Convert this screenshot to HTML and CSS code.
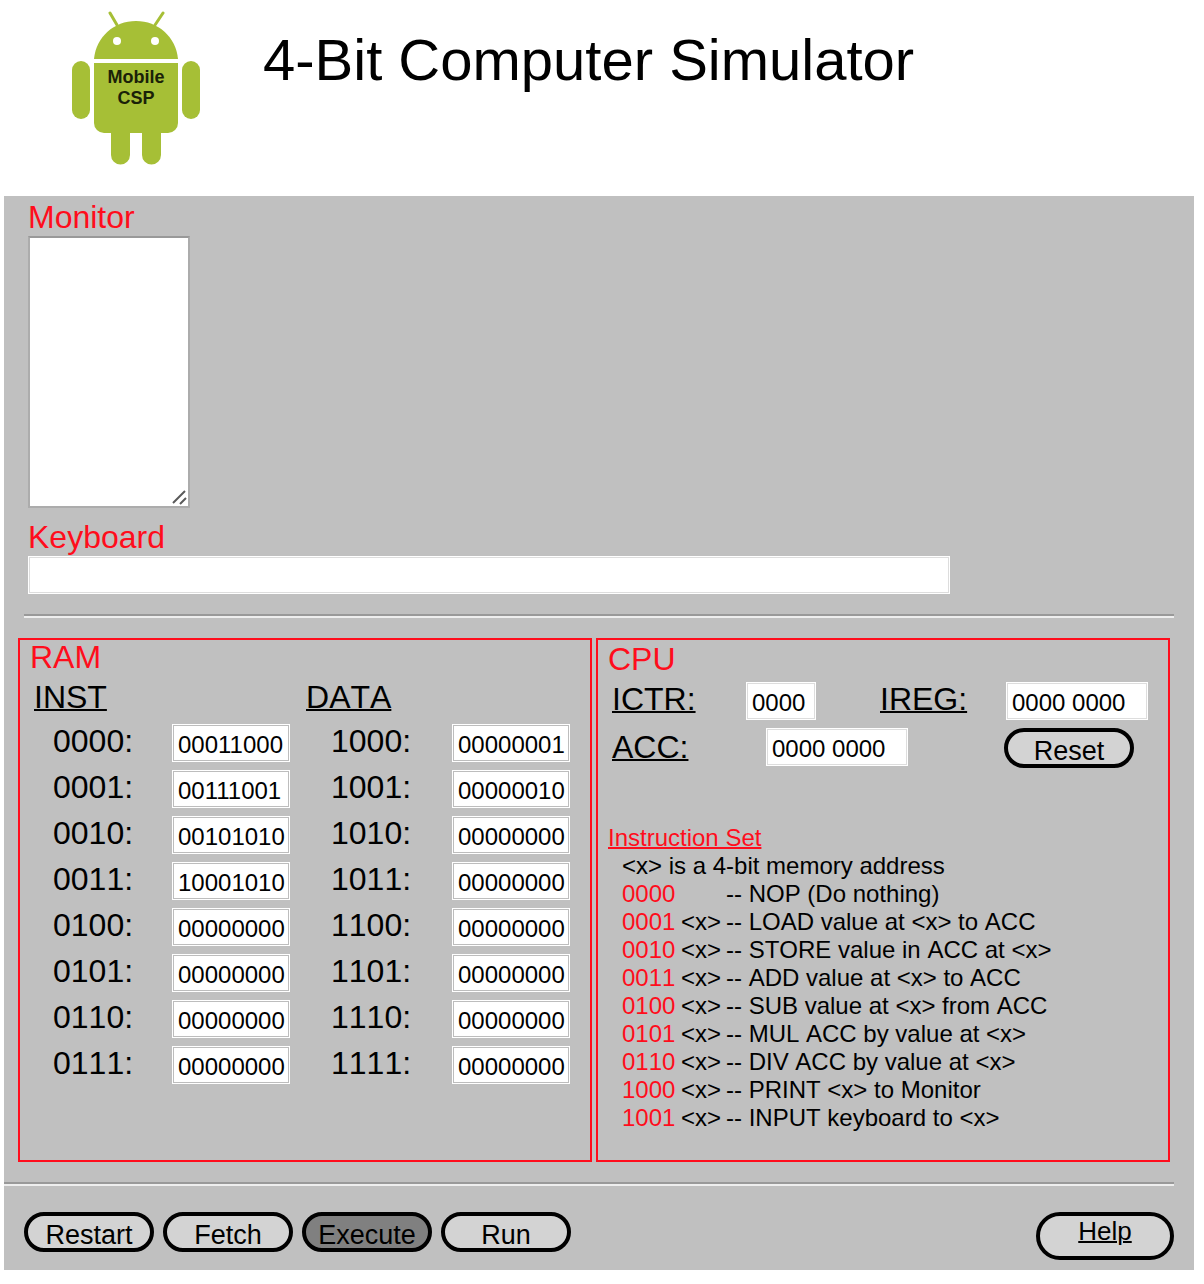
FILE: index.html
```html
<!DOCTYPE html>
<html lang="en">
<head>
<meta charset="utf-8">
<title>4-Bit Computer Simulator</title>
<link rel="stylesheet" href="styles.css">
</head>
<body>
<header class="masthead">
  <svg class="logo" viewBox="0 0 132 154" role="img" aria-label="Mobile CSP">
    <g fill="#a6bf36">
      <path d="M24 48C26 26 44 10 66 10s40 16 42 38z"/>
      <path d="M24 52h84v60a10 10 0 0 1-10 10H34a10 10 0 0 1-10-10z"/>
      <rect x="2" y="50" width="18" height="58" rx="9"/>
      <rect x="112" y="50" width="18" height="58" rx="9"/>
      <path d="M41 118h19v26a9 9 0 0 1-19 0zM72 118h19v26a9 9 0 0 1-19 0z"/>
    </g>
    <path d="M40 2l7 12M93 2l-8 12" stroke="#a6bf36" stroke-width="3" stroke-linecap="round"/>
    <circle cx="47" cy="30" r="4" fill="#fff"/>
    <circle cx="85" cy="30" r="4" fill="#fff"/>
    <text class="logo-text" x="66" y="72">Mobile</text>
    <text class="logo-text" x="66" y="93">CSP</text>
  </svg>
  <h1 class="title">4-Bit Computer Simulator</h1>
</header>

<main class="simulator">
  <section class="io">
    <label class="heading" for="monitor">Monitor</label>
    <div class="monitor-wrap">
      <textarea class="monitor" id="monitor"></textarea>
      <svg class="grip" viewBox="0 0 16 16" aria-hidden="true"><path d="M1 13L13 1M8 14l6-6" stroke="#5a5a5a" stroke-width="2"/></svg>
    </div>
    <label class="heading heading-keyboard" for="keyboard">Keyboard</label>
    <input class="field keyboard" id="keyboard" type="text">
  </section>
  <hr class="rule rule-inset">

  <div class="units">
    <section class="unit ram">
      <h2 class="heading">RAM</h2>
      <table class="memory">
        <colgroup><col class="col-inst"><col class="col-inst-value"><col class="col-data"><col class="col-data-value"></colgroup>
        <thead><tr><th class="bank bank-inst" colspan="2">INST</th><th class="bank" colspan="2">DATA</th></tr></thead>
        <tbody>
          <tr><td class="addr"><label for="m0">0000:</label></td><td><input class="field cell" id="m0" value="00011000"></td><td class="addr addr-data"><label for="m8">1000:</label></td><td><input class="field cell" id="m8" value="00000001"></td></tr>
          <tr><td class="addr"><label for="m1">0001:</label></td><td><input class="field cell" id="m1" value="00111001"></td><td class="addr addr-data"><label for="m9">1001:</label></td><td><input class="field cell" id="m9" value="00000010"></td></tr>
          <tr><td class="addr"><label for="m2">0010:</label></td><td><input class="field cell" id="m2" value="00101010"></td><td class="addr addr-data"><label for="m10">1010:</label></td><td><input class="field cell" id="m10" value="00000000"></td></tr>
          <tr><td class="addr"><label for="m3">0011:</label></td><td><input class="field cell" id="m3" value="10001010"></td><td class="addr addr-data"><label for="m11">1011:</label></td><td><input class="field cell" id="m11" value="00000000"></td></tr>
          <tr><td class="addr"><label for="m4">0100:</label></td><td><input class="field cell" id="m4" value="00000000"></td><td class="addr addr-data"><label for="m12">1100:</label></td><td><input class="field cell" id="m12" value="00000000"></td></tr>
          <tr><td class="addr"><label for="m5">0101:</label></td><td><input class="field cell" id="m5" value="00000000"></td><td class="addr addr-data"><label for="m13">1101:</label></td><td><input class="field cell" id="m13" value="00000000"></td></tr>
          <tr><td class="addr"><label for="m6">0110:</label></td><td><input class="field cell" id="m6" value="00000000"></td><td class="addr addr-data"><label for="m14">1110:</label></td><td><input class="field cell" id="m14" value="00000000"></td></tr>
          <tr><td class="addr"><label for="m7">0111:</label></td><td><input class="field cell" id="m7" value="00000000"></td><td class="addr addr-data"><label for="m15">1111:</label></td><td><input class="field cell" id="m15" value="00000000"></td></tr>
        </tbody>
      </table>
    </section>

    <section class="unit cpu">
      <h2 class="heading">CPU</h2>
      <div class="registers">
        <label class="reg" for="ictr">ICTR:</label>
        <input class="field ictr" id="ictr" value="0000">
        <label class="reg reg-ireg" for="ireg">IREG:</label>
        <input class="field word" id="ireg" value="0000 0000">
      </div>
      <div class="registers">
        <label class="reg reg-acc" for="acc">ACC:</label>
        <input class="field word" id="acc" value="0000 0000">
        <button class="button reset" type="button">Reset</button>
      </div>
      <h3 class="set-title">Instruction Set</h3>
      <ul class="set">
        <li>&lt;x&gt; is a 4-bit memory address</li>
        <li class="op"><span class="code">0000</span><span></span><span>-- NOP (Do nothing)</span></li>
        <li class="op"><span class="code">0001</span><span>&lt;x&gt;</span><span>-- LOAD value at &lt;x&gt; to ACC</span></li>
        <li class="op"><span class="code">0010</span><span>&lt;x&gt;</span><span>-- STORE value in ACC at &lt;x&gt;</span></li>
        <li class="op"><span class="code">0011</span><span>&lt;x&gt;</span><span>-- ADD value at &lt;x&gt; to ACC</span></li>
        <li class="op"><span class="code">0100</span><span>&lt;x&gt;</span><span>-- SUB value at &lt;x&gt; from ACC</span></li>
        <li class="op"><span class="code">0101</span><span>&lt;x&gt;</span><span>-- MUL ACC by value at &lt;x&gt;</span></li>
        <li class="op"><span class="code">0110</span><span>&lt;x&gt;</span><span>-- DIV ACC by value at &lt;x&gt;</span></li>
        <li class="op"><span class="code">1000</span><span>&lt;x&gt;</span><span>-- PRINT &lt;x&gt; to Monitor</span></li>
        <li class="op"><span class="code">1001</span><span>&lt;x&gt;</span><span>-- INPUT keyboard to &lt;x&gt;</span></li>
      </ul>
    </section>
  </div>
  <hr class="rule">

  <div class="controls">
    <button class="button" type="button">Restart</button>
    <button class="button" type="button">Fetch</button>
    <button class="button button-active" type="button">Execute</button>
    <button class="button" type="button">Run</button>
    <a class="help" href="#help">Help</a>
  </div>
</main>
</body>
</html>
```
FILE: styles.css
```css
* { box-sizing: border-box; }

body {
  margin: 0 10px 14px 4px;
  background: #fff;
  color: #000;
  font-family: "Liberation Sans", Arial, sans-serif;
  font-size: 32px;
  font-kerning: none;
  line-height: 34px;
}

h1, h2, h3, ul { margin: 0; padding: 0; font-weight: normal; }

.masthead {
  display: flex;
  align-items: flex-start;
  gap: 61px;
  height: 196px;
  padding: 11px 0 0 66px;
}
.logo { flex: none; width: 132px; height: 154px; }
.logo-text { font-size: 18px; font-weight: bold; text-anchor: middle; fill: #1a2108; }
.title { padding-top: 16px; font-size: 58px; line-height: 66px; }

.simulator { background: #c0c0c0; padding: 4px 0 18px; }

.heading { display: block; padding-bottom: 2px; color: #ff0d1c; font-size: 32px; line-height: 34px; }
.io { padding: 0 24px; }

.monitor-wrap { position: relative; width: 162px; height: 272px; }
.monitor {
  display: block;
  width: 100%;
  height: 100%;
  border: 2px solid #acacac;
  border-top-color: #999;
  border-radius: 0;
  background: #fff;
  resize: none;
  font: inherit;
}
.grip { position: absolute; right: 2px; bottom: 2px; width: 16px; height: 16px; fill: none; }
.heading-keyboard { padding-top: 12px; }

.field {
  display: block;
  height: 38px;
  margin: 0;
  padding: 3px 2px 0 5px;
  border: 1px solid #fff;
  border-radius: 0;
  background: #fff;
  box-shadow: inset 0 0 0 1px #ddd;
  color: #000;
  font-family: inherit;
  font-size: 24px;
}
.keyboard { width: 922px; max-width: 100%; }

.rule {
  height: 4px;
  margin: 20px 20px 0 0;
  border: 0;
  border-top: 2px solid #999;
  border-bottom: 2px solid #eee;
}
.rule-inset { margin-left: 20px; }

.units {
  display: grid;
  grid-template-columns: 1fr 1fr;
  gap: 4px;
  margin: 20px 24px 0 14px;
}
.unit { min-height: 524px; border: 2px solid #ff0d1c; padding: 0 10px 24px; }

.memory { border-collapse: collapse; table-layout: fixed; width: 540px; margin-top: 2px; }
.memory td, .memory th { padding: 0; text-align: left; vertical-align: top; font-weight: normal; }
.memory tr { height: 46px; }
.memory .bank { padding: 2px 0 0; text-decoration: underline; text-decoration-thickness: 2px; }
.memory .bank-inst { padding-left: 4px; }
.memory .addr { padding-left: 23px; }
.memory .addr-data { padding-left: 25px; }
.col-inst { width: 142px; }
.col-inst-value { width: 134px; }
.col-data { width: 146px; }
.col-data-value { width: 118px; }
.cell { width: 118px; box-shadow: inset 0 0 0 1px #bdbdbd; }

.cpu { padding-top: 2px; }
.registers {
  display: flex;
  align-items: flex-start;
  margin: 4px 10px 0 4px;
  padding-bottom: 4px;
}
.reg { width: 134px; text-decoration: underline; text-decoration-thickness: 2px; }
.reg-acc { width: 154px; padding-top: 2px; }
.reg-ireg { width: 126px; }
.ictr { width: 70px; margin-right: auto; }
.word { width: 142px; }

.button {
  width: 130px;
  height: 40px;
  padding: 6px 0 0;
  border: 4px solid #000;
  border-radius: 20px;
  background: #d3d3d3;
  color: #000;
  font-family: inherit;
  font-size: 27px;
  line-height: 26px;
}
.button-active { background: #808080; }
.reset { margin: 0 14px 0 auto; }

.set-title {
  margin-top: 52px;
  color: #ff0d1c;
  font-size: 24px;
  line-height: 28px;
  text-decoration: underline;
  text-decoration-thickness: 2px;
}
.set { padding-left: 14px; list-style: none; font-size: 24px; line-height: 28px; }
.op { display: grid; grid-template-columns: 59px 45px 1fr; min-height: 28px; }
.code { color: #ff0d1c; }

.controls { display: flex; align-items: flex-start; gap: 9px; padding: 26px 20px 0; }
.controls { margin-bottom: -8px; }
.help {
  width: 138px;
  height: 48px;
  margin-left: auto;
  border: 4px solid #000;
  border-radius: 24px;
  background: #d3d3d3;
  color: #000;
  font-size: 26px;
  line-height: 30px;
  text-align: center;
  text-decoration-thickness: 2px;
}
```
